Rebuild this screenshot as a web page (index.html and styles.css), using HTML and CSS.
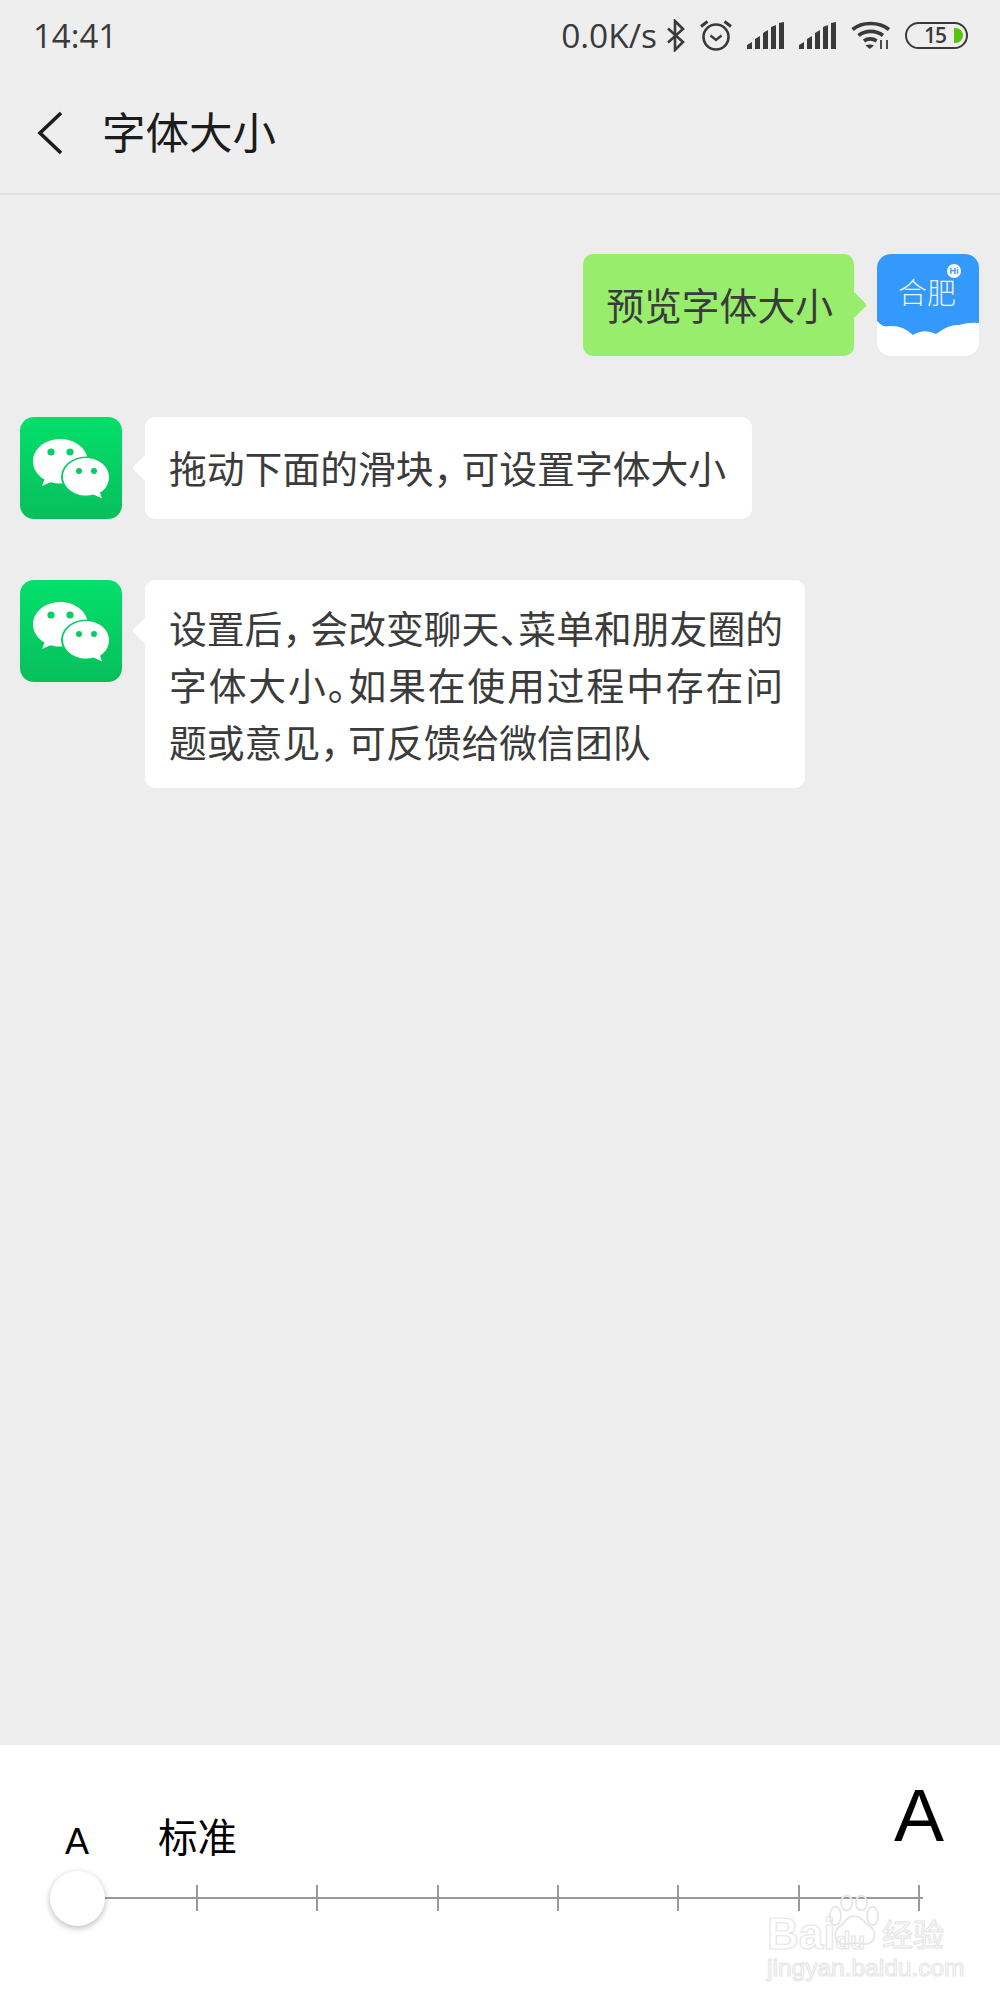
FILE: index.html
```html
<!DOCTYPE html>
<html lang="zh-CN">
<head>
  <meta charset="UTF-8">
  <title>字体大小</title>
  <link rel="stylesheet" href="styles.css">
</head>
<body>
  <div class="page">
    <div class="status-bar">
      <span class="time">14:41</span>
      <div class="status-right">
        <span class="speed">0.0K/s</span>
        <svg class="ic-bt" width="20" height="33" viewBox="0 0 20 33"><path d="M2 9.500 17 23 9 31V2l8 8L2 23.500" fill="none" stroke="#3a3a3a" stroke-width="2.600"/></svg>
        <svg class="ic-alarm" width="34" height="33" viewBox="0 0 34 33">
          <circle cx="17" cy="18" r="12.500" fill="none" stroke="#3a3a3a" stroke-width="2.600"/>
          <path d="M11.500 16.500 17 21l5.500-4.500" fill="none" stroke="#3a3a3a" stroke-width="2.400"/>
          <path d="M2 7.500 8.500 2.500M32 7.500 25.500 2.500" fill="none" stroke="#3a3a3a" stroke-width="3"/>
        </svg>
        <svg class="ic-signal" width="37" height="27" viewBox="0 0 37 27"><path d="M0 27v-4l5-3v7zM8 27V17l5-3v13zM16 27V11l5-3v19zM24 27V5l5-2v24zM32 27V1l5-1v27z" fill="#3a3a3a"/></svg>
        <svg class="ic-signal ic-signal-b" width="37" height="27" viewBox="0 0 37 27"><path d="M0 27v-4l5-3v7zM8 27V17l5-3v13zM16 27V11l5-3v19zM24 27V5l5-2v24zM32 27V1l5-1v27z" fill="#3a3a3a"/></svg>
        <svg class="ic-wifi" width="40" height="30" viewBox="0 0 40 30">
          <path d="M1.500 9.500C11 1.500 28 1.500 38 9.500M7.500 15.500c7-5.500 17.500-5.500 24.500 0M13 21c3.500-2.800 9-2.800 12.500 0" fill="none" stroke="#3a3a3a" stroke-width="3.600"/>
          <path d="M14.500 25.500c2.500-1.500 6-1.500 8.500 0l-4.200 3.500z" fill="#3a3a3a"/>
          <path d="M30 20v9M36 20v9" stroke="#3a3a3a" stroke-width="1.800"/>
        </svg>
        <div class="battery"><span class="battery-num">15</span><span class="battery-level"></span></div>
      </div>
    </div>

    <header class="title-bar">
      <svg class="back" width="26" height="44" viewBox="0 0 26 44"><path d="M24 2 3 22l21 20" fill="none" stroke="#1c1c1c" stroke-width="3.600"/></svg>
      <h1>字体大小</h1>
    </header>

    <main class="chat">
      <div class="row row-me">
        <div class="bubble bubble-green">预览字体大小</div>
        <svg class="avatar" width="102" height="102" viewBox="0 0 102 102">
          <path d="M0 0h102v102H0z" fill="#fff"/>
          <path d="M0 67Q6 74 12 72 26 71 36 81 47 74 59 80 72 70 82 71 92 68 102 69V0H0z" fill="#3399fd"/>
          <text class="hefei" x="21" y="50">合肥</text>
          <circle cx="77" cy="17" r="7" fill="#fff"/>
          <text class="hi" x="77" y="20">Hi</text>
        </svg>
      </div>

      <div class="row">
        <svg class="avatar" width="102" height="102" viewBox="0 0 102 102">
          <use href="#wx"/>
        </svg>
        <div class="bubble">拖动下面的滑块<span class="comma">，</span>可设置字体大小</div>
      </div>

      <div class="row">
        <svg class="avatar" width="102" height="102" viewBox="0 0 102 102">
          <use href="#wx"/>
        </svg>
        <div class="bubble bubble-long">
          <span class="line">设置后<span class="comma">，</span>会改变聊天、菜单和朋友圈的</span>
          <span class="line">字体大小。如果在使用过程中存在问</span>
          <span class="line line-last">题或意见<span class="comma">，</span>可反馈给微信团队</span>
        </div>
      </div>
    </main>

    <section class="panel">
      <div class="labels">
        <span class="a-small">A</span>
        <span class="standard">标准</span>
        <span class="a-big">A</span>
      </div>
      <div class="slider">
        <div class="knob"></div>
        <div class="ticks">
          <i></i><i></i><i></i><i></i><i></i><i></i><i></i>
        </div>
      </div>

      <div class="watermark">
        <svg class="paw" width="52" height="57" viewBox="0 0 56 60">
          <g fill="none" stroke="#e6e6e6" stroke-width="2">
            <ellipse cx="8" cy="24" rx="6" ry="10"/>
            <ellipse cx="20" cy="10" rx="6" ry="8"/>
            <ellipse cx="36" cy="10" rx="6" ry="8"/>
            <ellipse cx="48" cy="24" rx="6" ry="10"/>
            <path d="M28 24c-8 0-10 8-16 12-8 6-4 20 8 18 6-1 12-1 18 0 12 2 16-12 8-18-6-4-10-12-18-12z"/>
          </g>
        </svg>
        <span class="wm-brand">Bai<b>du</b></span>
        <span class="wm-cn">经验</span>
        <span class="wm-url">jingyan.baidu.com</span>
      </div>
    </section>
  </div>

  <svg class="defs" width="0" height="0">
    <defs>
      <linearGradient id="wxbg" x1="0" y1="0" x2="0" y2="1">
        <stop offset="0" stop-color="#03e06a"/>
        <stop offset="1" stop-color="#07bf5c"/>
      </linearGradient>
      <g id="wx">
        <rect width="102" height="102" rx="10" fill="url(#wxbg)"/>
        <path d="M40.500 22C25 22 13 32 13 44.500c0 7.500 4.500 14 11.500 18L22 69l8.500-3.800c3 .8 6.500 1.300 10 1.300 15 0 27.500-10 27.500-22S55.500 22 40.500 22z" fill="#fff"/>
        <circle cx="31" cy="35" r="3.600" fill="#06cf63"/>
        <circle cx="50" cy="35" r="3.600" fill="#06cf63"/>
        <ellipse cx="66" cy="60" rx="25" ry="20.500" fill="#06cc62"/>
        <path d="M66 41c-12.500 0-23 8.500-23 18.700S53.500 78.500 66 78.500c2.500 0 5-.3 7.500-1L82 81.500l-2-6c6-3.500 9-9.500 9-15.800C89 49.500 78.500 41 66 41z" fill="#fff"/>
        <circle cx="59" cy="54" r="3" fill="#06cc62"/>
        <circle cx="74" cy="54" r="3" fill="#06cc62"/>
      </g>
    </defs>
  </svg>
</body>
</html>
```

FILE: styles.css
```css
* {
  box-sizing: border-box;
}
body {
  margin: 0;
  background-color: #ededed;
  font-family: "Noto Sans CJK SC", "Noto Sans", sans-serif;
}
.page {
  width: 1000px;
  height: 2000px;
  display: flex;
  flex-direction: column;
  overflow: hidden;
}
.defs {
  position: absolute;
}

/* status bar */
.status-bar {
  height: 66px;
  flex: none;
  padding: 4px 32px 0 33px;
  display: flex;
  align-items: center;
  justify-content: space-between;
  background-color: #eee;
  color: #3a3a3a;
}
.time {
  font-family: "Open Sans", sans-serif;
  font-size: 33px;
}
.status-right {
  display: flex;
  align-items: center;
}
.speed {
  font-family: "Open Sans", sans-serif;
  font-size: 33.500px;
  margin-right: 9px;
}
.ic-alarm {
  margin-left: 13px;
}
.ic-signal {
  margin-left: 14px;
}
.ic-signal-b {
  margin-left: 15px;
}
.ic-wifi {
  margin-left: 15px;
}
.battery {
  width: 63px;
  height: 27px;
  margin-left: 14px;
  padding: 0 3px 0 17px;
  border: 2.600px solid #3a3a3a;
  border-radius: 14px;
  display: flex;
  align-items: center;
}
.battery-num {
  font-family: "Open Sans", sans-serif;
  font-size: 21px;
  font-weight: 600;
  line-height: 1;
  letter-spacing: -1px;
}
.battery-level {
  width: 9px;
  height: 15px;
  margin-left: auto;
  background-color: #55c50e;
  border-radius: 0 9px 9px 0;
}

/* title */
.title-bar {
  height: 129px;
  flex: none;
  padding: 6px 0 0 37px;
  display: flex;
  align-items: center;
  background-color: #eee;
  border-bottom: 2px solid #e0e0e0;
}
.back {
  flex: none;
}
.title-bar h1 {
  margin: 0 0 4px 39px;
  font-size: 43.500px;
  font-weight: 400;
  color: #1c1c1c;
}

/* chat */
.chat {
  flex: 1;
  padding: 59px 21px 0 20px;
  display: flex;
  flex-direction: column;
  gap: 61px;
}
.row {
  display: flex;
  align-items: flex-start;
  gap: 23px;
}
.row-me {
  justify-content: flex-end;
}
.avatar {
  flex: none;
  border-radius: 14px;
}
.bubble {
  position: relative;
  min-height: 102px;
  padding: 21px 26px 16px 24px;
  background-color: #fff;
  border-radius: 10px;
  color: #3b3b3b;
  font-size: 37.800px;
  line-height: 57px;
  font-feature-settings: "halt";
}
.comma {
  margin-right: 9px;
}
.bubble::after {
  content: "";
  position: absolute;
  top: 41px;
  left: -9px;
  width: 20px;
  height: 20px;
  background-color: inherit;
  border-radius: 3px;
  transform: rotate(45deg);
}
.bubble-green {
  padding-left: 23px;
  padding-right: 21px;
  background-color: #98ee6c;
}
.bubble-green::after {
  left: auto;
  right: -9px;
}
.bubble-long {
  width: 660px;
  padding-top: 18px;
  padding-right: 22px;
  padding-bottom: 19px;
}
.line {
  display: block;
  white-space: nowrap;
  text-align: justify;
  text-align-last: justify;
}
.line-last {
  text-align-last: left;
}

.hefei {
  font-size: 29px;
  font-weight: 300;
  fill: #eaf4ff;
}
.hi {
  font-family: "Liberation Sans", sans-serif;
  font-size: 9px;
  font-weight: 700;
  text-anchor: middle;
  fill: #3399fd;
}

/* bottom panel */
.panel {
  position: relative;
  height: 255px;
  flex: none;
  padding: 34px 56px 0 0;
  background-color: #fff;
  color: #000;
}
.labels {
  height: 84px;
  display: flex;
  align-items: flex-end;
}
.a-small {
  width: 154px;
  margin-bottom: 3px;
  text-align: center;
  font-family: "Liberation Sans", sans-serif;
  font-size: 36px;
  line-height: 1;
}
.standard {
  margin-left: 4px;
  margin-bottom: 5px;
  font-size: 39.500px;
  line-height: 1.200;
}
.a-big {
  margin-left: auto;
  margin-bottom: 10px;
  font-family: "Liberation Sans", sans-serif;
  font-size: 75px;
  line-height: 1;
}
.slider {
  position: relative;
  margin: 22px 21px 0 77px;
  height: 26px;
  background: linear-gradient(#999, #999) center / 100% 2px no-repeat;
}
.ticks {
  height: 26px;
  padding-left: 119px;
  margin-right: 3px;
  display: flex;
  justify-content: space-between;
}
.ticks i {
  width: 2px;
  background-color: #999;
}
.knob {
  position: absolute;
  left: -27px;
  top: -14px;
  width: 55px;
  height: 55px;
  background-color: #fff;
  border-radius: 50%;
  box-shadow: 0 2px 6px rgba(0, 0, 0, 0.28);
}

/* faint logo stamp over the corner */
.watermark {
  position: absolute;
  left: 767px;
  top: 152px;
  width: 180px;
  height: 95px;
  color: transparent;
  -webkit-text-stroke: 1.200px #e6e6e6;
  font-family: "Liberation Sans", sans-serif;
}
.paw {
  position: absolute;
  left: 61px;
  top: -4px;
}
.wm-brand {
  position: absolute;
  left: 0;
  top: 17px;
  font-size: 44px;
  font-weight: 700;
  line-height: 40px;
}
.wm-brand b {
  font-size: 24px;
}
.wm-cn {
  position: absolute;
  left: 115px;
  top: 17px;
  font-family: "Noto Sans CJK SC", sans-serif;
  font-size: 31px;
  line-height: 1.200;
}
.wm-url {
  position: absolute;
  left: 0;
  top: 59px;
  font-size: 24.500px;
  line-height: 1;
}
```
